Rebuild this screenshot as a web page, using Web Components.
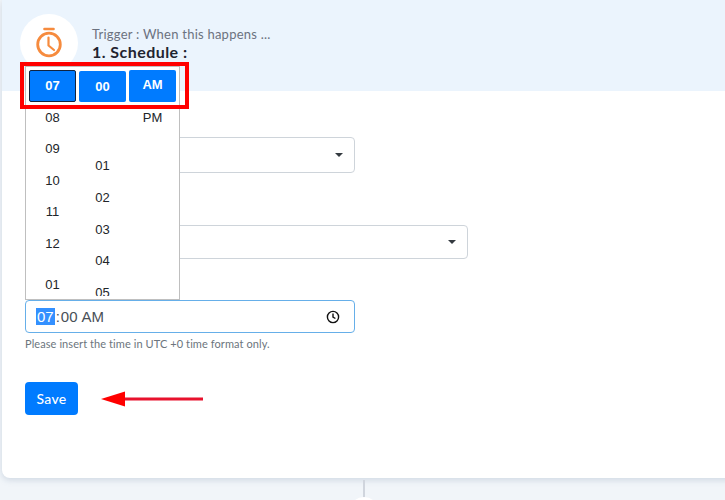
<!DOCTYPE html>
<html>
<head>
<meta charset="utf-8">
<title>Schedule</title>
<style>
html, body { margin: 0; height: 500px; overflow: hidden; background: #f1f5f9; font-family: Lato, "Open Sans", sans-serif; }
</style>
</head>
<body>
<trigger-step>
	<step-header slot="header" label="Trigger : When this happens ..." name="1. Schedule :"></step-header>
	<select-box style="width:330px;margin-top:46px"></select-box>
	<select-box style="width:443px;height:34px;margin-top:52px"></select-box>
	<time-field style="margin-top:41px"></time-field>
	<p-hint>Please insert the time in UTC +0 time format only.</p-hint>
	<save-row>Save</save-row>
	<time-popup slot="overlay"></time-popup>
	<red-frame slot="overlay"></red-frame>
</trigger-step>

<script>
class TriggerStep extends HTMLElement {
	constructor() {
		super();
		this.attachShadow({ mode: 'open' }).innerHTML = `
			<style>
			:host { display: block; position: relative; height: 500px; overflow: hidden; }
			.card {
				margin-left: 2px;
				width: 760px;
				height: 478px;
				box-sizing: border-box;
				background: #fff;
				border-radius: 0 0 8px 8px;
				box-shadow: 0 2px 6px rgba(120, 140, 170, 0.28);
				display: flex;
				flex-direction: column;
			}
			.body { padding: 0 23px; display: flex; flex-direction: column; align-items: flex-start; }
			.line { position: absolute; left: 363px; top: 480px; width: 2px; height: 20px; background: #d0d5dd; }
			.dot { position: absolute; left: 349px; top: 497px; width: 30px; height: 30px; border-radius: 50%; background: #fff; }
			</style>
			<div class="card">
				<slot name="header"></slot>
				<div class="body"><slot></slot></div>
			</div>
			<div class="line"></div>
			<div class="dot"></div>
			<slot name="overlay"></slot>
		`;
	}
}

class StepHeader extends HTMLElement {
	constructor() {
		super();
		this.attachShadow({ mode: 'open' });
	}

	connectedCallback() {
		this.shadowRoot.innerHTML = `
			<style>
			:host {
				display: flex;
				height: 91px;
				box-sizing: border-box;
				background: #ebf4fd;
				padding: 14px 0 0 18px;
				gap: 14px;
			}
			.icon {
				width: 58px;
				height: 58px;
				border-radius: 50%;
				background: #fff;
				display: flex;
				align-items: center;
				justify-content: center;
				flex: none;
			}
			.text { padding-top: 12px; }
			.label { font-size: 13px; line-height: 16px; color: #6b7280; letter-spacing: 0.24px; }
			.name { font-size: 16px; line-height: 19px; font-weight: 700; color: #1f2430; letter-spacing: 0.45px; }
			</style>
			<div class="icon">
				<svg width="28" height="32" viewBox="0 0 28 32" fill="none" stroke="#f68b3e" stroke-linecap="round" stroke-linejoin="round">
					<path d="M9.5 2h9" stroke-width="2.6"/>
					<circle cx="14" cy="17.5" r="11.3" stroke-width="2.8"/>
					<path d="M13.5 10.5v8l5.5 4.5" stroke-width="2.2"/>
				</svg>
			</div>
			<div class="text">
				<div class="label">${this.getAttribute('label')}</div>
				<div class="name">${this.getAttribute('name')}</div>
			</div>
		`;
	}
}

class SelectBox extends HTMLElement {
	constructor() {
		super();
		this.attachShadow({ mode: 'open' }).innerHTML = `
			<style>
			:host {
				display: flex;
				align-items: center;
				justify-content: flex-end;
				box-sizing: border-box;
				height: 36px;
				padding-right: 11px;
				border: 1px solid #ced4da;
				border-radius: 4px;
				background: #fff;
			}
			.caret { width: 0; height: 0; border: 4.5px solid transparent; border-top-color: #343a40; border-bottom: 0; }
			</style>
			<div class="caret"></div>
		`;
	}
}

class TimeField extends HTMLElement {
	constructor() {
		super();
		this.attachShadow({ mode: 'open' }).innerHTML = `
			<style>
			:host {
				display: flex;
				align-items: center;
				box-sizing: border-box;
				width: 330px;
				height: 33px;
				padding: 0 14px 0 10px;
				border: 1px solid #66afe9;
				border-radius: 4px;
				background: #fff;
				font: 15px "Liberation Sans", Arial, sans-serif;
				color: #495057;
			}
			.sel { background: #3390ff; color: #fff; padding: 0 1px; }
			.value { flex: 1; display: flex; align-items: center; white-space: pre; }
			.colon { padding: 0 1px; }
			.ampm { margin-left: 4px; }
			</style>
			<span class="value"><span class="sel">07</span><span class="colon">:</span><span>00</span><span class="ampm">AM</span></span>
			<svg width="14" height="14" viewBox="0 0 14 14" fill="none" stroke="#111" stroke-width="1.4">
				<circle cx="7" cy="7" r="5.6"/>
				<path d="M7 3.6V7l2.4 1.5"/>
			</svg>
		`;
	}
}

class PHint extends HTMLElement {
	constructor() {
		super();
		this.attachShadow({ mode: 'open' }).innerHTML = `
			<style>
			:host { display: block; margin-top: 4px; font-size: 11px; line-height: 14px; color: #6c757d; letter-spacing: 0.08px; }
			</style>
			<slot></slot>
		`;
	}
}

class SaveRow extends HTMLElement {
	constructor() {
		super();
		this.attachShadow({ mode: 'open' }).innerHTML = `
			<style>
			:host { display: flex; align-items: center; gap: 23px; margin-top: 31px; }
			button {
				width: 53px;
				height: 33px;
				border: 0;
				padding: 0;
				border-radius: 4px;
				background: #007bff;
				color: #fff;
				font: 500 14px Lato, sans-serif;
				letter-spacing: 0.3px;
			}
			svg { display: block; margin-top: 1px; }
			</style>
			<button><slot></slot></button>
			<svg width="103" height="16" viewBox="0 0 103 16">
				<path d="M22 6.5H102v3H22z" fill="#e8112d"/>
				<path d="M0 8 24 0.5v15z" fill="#f00"/>
			</svg>
		`;
	}
}

class TimeColumn extends HTMLElement {
	constructor() {
		super();
		this.attachShadow({ mode: 'open' });
	}

	connectedCallback() {
		const rows = this.getAttribute('items').split(',').map((item) => {
			const [text, top] = item.split(':');
			return `<div class="item" style="margin-top:${top}px">${text}</div>`;
		}).join('');
		const dark = this.hasAttribute('focused');
		this.shadowRoot.innerHTML = `
			<style>
			:host { display: flex; flex-direction: column; width: 47px; }
			.active {
				flex: none;
				box-sizing: border-box;
				height: ${this.getAttribute('box') || 32}px;
				margin-top: ${this.getAttribute('offset') || 0}px;
				padding-bottom: ${this.getAttribute('lift') || 0}px;
				border-radius: 2px;
				background: #007bff;
				color: #fff;
				font-weight: 700;
				display: flex;
				align-items: center;
				justify-content: center;
				${dark ? 'border: 1px solid #10233f;' : ''}
			}
			.item { flex: none; height: 16px; line-height: 16px; text-align: center; color: #212529; }
			</style>
			<div class="active">${this.getAttribute('active')}</div>
			${rows}
		`;
	}
}

class TimePopup extends HTMLElement {
	constructor() {
		super();
		this.attachShadow({ mode: 'open' }).innerHTML = `
			<style>
			:host {
				position: absolute;
				left: 25px;
				top: 66px;
				width: 155px;
				height: 234px;
				box-sizing: border-box;
				background: #fff;
				border: 1px solid #bfbfbf;
				font: 13px "Liberation Sans", Arial, sans-serif;
			}
			.cols { display: flex; gap: 3px; height: 226px; overflow: hidden; padding: 3px 0 0 3px; box-sizing: content-box; }
			</style>
			<div class="cols">
				<time-column active="07" focused lift="2" items="08:7.5,09:15.5,10:15.5,11:15.5,12:16,01:25"></time-column>
				<time-column active="00" offset="1" box="31" items="01:56,02:16,03:16,04:15,05:16"></time-column>
				<time-column active="AM" lift="3" items="PM:7.5"></time-column>
			</div>
		`;
	}
}

class RedFrame extends HTMLElement {
	constructor() {
		super();
		this.attachShadow({ mode: 'open' }).innerHTML = `
			<style>
			:host {
				position: absolute;
				left: 20px;
				top: 62px;
				width: 169px;
				height: 47px;
				box-sizing: border-box;
				border: 4px solid #f00;
			}
			</style>
		`;
	}
}

customElements.define('trigger-step', TriggerStep);
customElements.define('step-header', StepHeader);
customElements.define('select-box', SelectBox);
customElements.define('time-field', TimeField);
customElements.define('p-hint', PHint);
customElements.define('save-row', SaveRow);
customElements.define('time-column', TimeColumn);
customElements.define('time-popup', TimePopup);
customElements.define('red-frame', RedFrame);
</script>
</body>
</html>
